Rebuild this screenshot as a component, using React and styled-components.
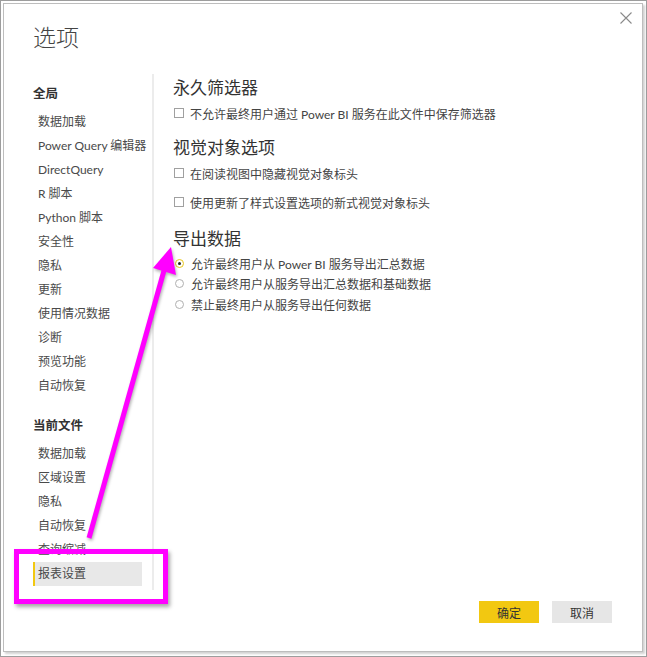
import React from "react";
import styled, { createGlobalStyle } from "styled-components";

const Global = createGlobalStyle`
  html, body { margin: 0; padding: 0; background: #fff; }
  body { font-family: Lato, "Noto Sans CJK SC", sans-serif; }
  * { box-sizing: border-box; }
`;

const Frame = styled.div`
  position: relative;
  width: 647px;
  height: 657px;
  border: 1px solid #9d9d9d;
  padding: 2px 3px 4px 2px;
  background: #fff;
  display: flex;
`;

const Dialog = styled.div`
  position: relative;
  flex: 1;
  border: 1px solid #bdbdbd;
  box-shadow: 2px 2px 2px rgba(0, 0, 0, 0.18);
  background: #fff;
  display: flex;
  flex-direction: column;
`;

const Header = styled.div`
  height: 70px;
  padding: 16px 0 0 29px;
`;

const Title = styled.h1`
  margin: 0;
  font-family: "Noto Sans CJK SC", sans-serif;
  font-size: 23px;
  line-height: 32px;
  font-weight: 300;
  color: #444;
`;

const CloseButton = styled.button`
  position: absolute;
  top: 4px;
  right: 6px;
  width: 20px;
  height: 20px;
  padding: 0;
  border: none;
  background: transparent;
  display: flex;
  align-items: center;
  justify-content: center;
`;

const Main = styled.div`
  display: flex;
  height: 516px;
`;

const Sidebar = styled.nav`
  width: 150px;
  padding: 8px 0 0 29px;
  border-right: 2px solid #ececec;
  display: flex;
  flex-direction: column;
`;

const SectionTitle = styled.div`
  font-family: "Noto Sans CJK SC", sans-serif;
  font-weight: 700;
  font-size: 12.5px;
  line-height: 24px;
  color: #333;
  margin-top: ${(p) => (p.$first ? "-1px" : "15px")};
  margin-bottom: 5px;
`;

const NavItem = styled.div`
  width: 109px;
  height: 24px;
  line-height: 24px;
  font-size: 12px;
  color: #4a4a4a;
  padding-left: 3px;
  border-left: 2px solid ${(p) => (p.$active ? "#f2c811" : "transparent")};
  background: ${(p) => (p.$active ? "#e8e8e8" : "transparent")};
  white-space: nowrap;
`;

const Content = styled.section`
  flex: 1;
  padding: 1px 0 0 19px;
  display: flex;
  flex-direction: column;
`;

const Heading = styled.h2`
  margin: ${(p) => p.$mt || "0"} 0 0 0;
  font-family: "Noto Sans CJK SC", sans-serif;
  font-size: 17px;
  line-height: 24px;
  font-weight: 400;
  color: #333;
`;

const Row = styled.label`
  display: flex;
  align-items: center;
  height: 20px;
  margin-top: ${(p) => p.$mt || "0"};
  font-size: 12px;
  color: #444;
  gap: 6px;
  padding-left: 1px;
  white-space: nowrap;
`;

const Box = styled.span`
  width: 10px;
  height: 10px;
  border: 1px solid #a0a0a0;
  background: #fff;
  flex: none;
`;

const Radio = styled.span`
  width: 9px;
  height: 9px;
  border-radius: 50%;
  border: 1px solid ${(p) => (p.$on ? "#e8c61a" : "#b0b0b0")};
  background: #fff;
  flex: none;
  display: flex;
  align-items: center;
  justify-content: center;
  margin-left: 1px;
  margin-right: 1px;
  &::after {
    content: "";
    width: 3px;
    height: 3px;
    border-radius: 50%;
    background: ${(p) => (p.$on ? "#222" : "transparent")};
  }
`;

const Footer = styled.div`
  display: flex;
  justify-content: flex-end;
  gap: 13px;
  padding: 11px 30px 0 0;
`;

const Button = styled.button`
  width: 60px;
  height: 22px;
  border: none;
  padding: 0;
  font-family: "Noto Sans CJK SC", sans-serif;
  font-size: 12px;
  color: #333;
  background: ${(p) => (p.$primary ? "#f2c811" : "#e6e6e6")};
`;

const Highlight = styled.div`
  position: absolute;
  left: 13px;
  top: 548px;
  width: 154px;
  height: 55px;
  border: 5px solid #ff00ff;
  box-shadow: 2px 3px 4px rgba(0, 0, 0, 0.35);
  pointer-events: none;
`;

const ArrowLayer = styled.svg`
  position: absolute;
  left: 0;
  top: 0;
  pointer-events: none;
  filter: drop-shadow(1px 2px 1.5px rgba(0, 0, 0, 0.3));
`;

const globalItems = [
  "数据加载",
  "Power Query 编辑器",
  "DirectQuery",
  "R 脚本",
  "Python 脚本",
  "安全性",
  "隐私",
  "更新",
  "使用情况数据",
  "诊断",
  "预览功能",
  "自动恢复",
];

const fileItems = ["数据加载", "区域设置", "隐私", "自动恢复", "查询缩减", "报表设置"];

export default function App() {
  return (
    <>
      <Global />
      <Frame>
        <Dialog>
          <Header>
            <Title>选项</Title>
          </Header>
          <CloseButton aria-label="关闭">
            <svg width="12" height="12" viewBox="0 0 12 12">
              <path d="M0.5 0.5 L11.5 11.5 M11.5 0.5 L0.5 11.5" stroke="#8a8a8a" strokeWidth="1.1" fill="none" />
            </svg>
          </CloseButton>
          <Main>
            <Sidebar>
              <SectionTitle $first>全局</SectionTitle>
              {globalItems.map((t) => (
                <NavItem key={"g" + t}>{t}</NavItem>
              ))}
              <SectionTitle>当前文件</SectionTitle>
              {fileItems.map((t) => (
                <NavItem key={"f" + t} $active={t === "报表设置"}>
                  {t}
                </NavItem>
              ))}
            </Sidebar>
            <Content>
              <Heading>永久筛选器</Heading>
              <Row $mt="4px">
                <Box />
                不允许最终用户通过 Power BI 服务在此文件中保存筛选器
              </Row>
              <Heading $mt="12px">视觉对象选项</Heading>
              <Row $mt="4px">
                <Box />
                在阅读视图中隐藏视觉对象标头
              </Row>
              <Row $mt="9px">
                <Box />
                使用更新了样式设置选项的新式视觉对象标头
              </Row>
              <Heading $mt="14px">导出数据</Heading>
              <Row $mt="3px">
                <Radio $on />
                允许最终用户从 Power BI 服务导出汇总数据
              </Row>
              <Row>
                <Radio />
                允许最终用户从服务导出汇总数据和基础数据
              </Row>
              <Row $mt="1px">
                <Radio />
                禁止最终用户从服务导出任何数据
              </Row>
            </Content>
          </Main>
          <Footer>
            <Button $primary>确定</Button>
            <Button>取消</Button>
          </Footer>
        </Dialog>
        <Highlight />
        <ArrowLayer width="647" height="657" viewBox="0 0 647 657">
          <line x1="88" y1="537" x2="164" y2="266" stroke="#ff00ff" strokeWidth="5" />
          <polygon points="170,246 152,267 175,274" fill="#ff00ff" />
        </ArrowLayer>
      </Frame>
    </>
  );
}
